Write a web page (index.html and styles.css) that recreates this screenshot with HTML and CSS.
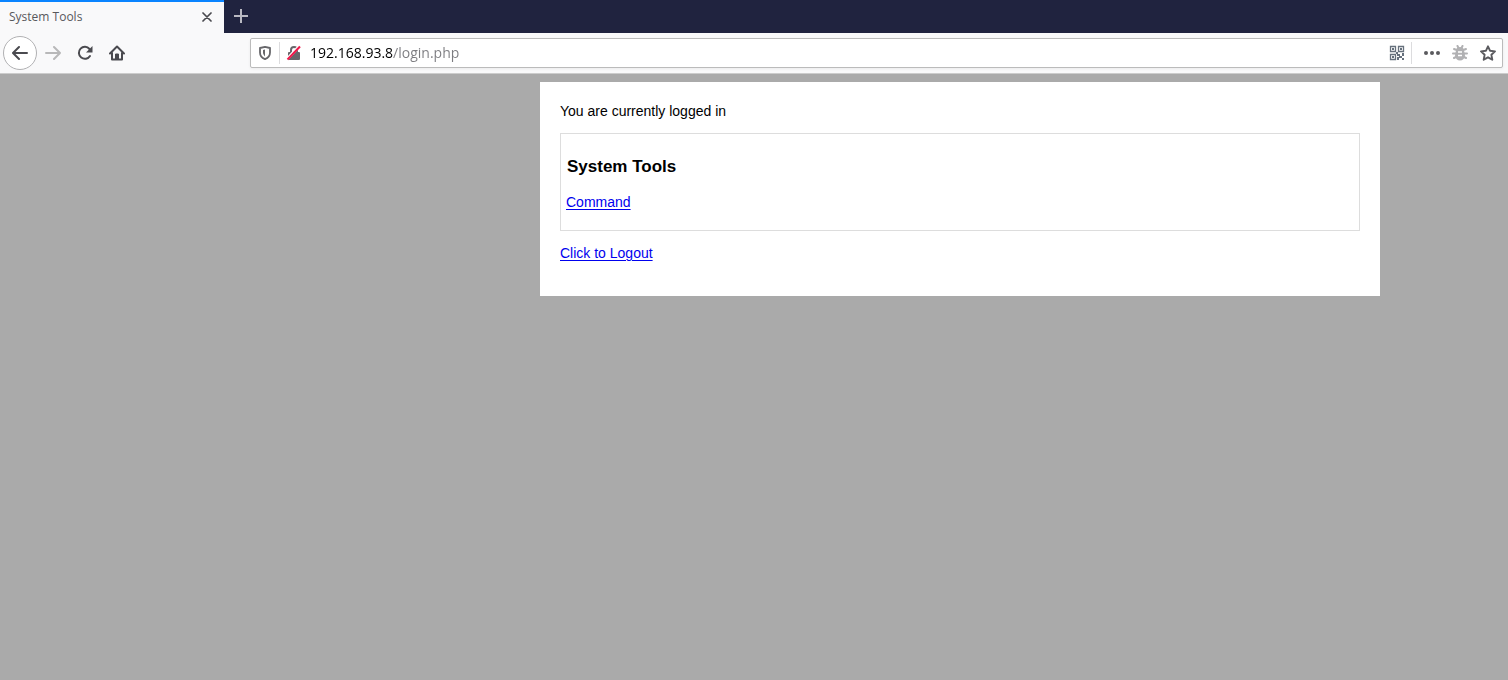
FILE: index.html
```html
<!DOCTYPE html>
<html lang="en">
<head>
<meta charset="utf-8">
<title>System Tools</title>
<link rel="stylesheet" href="styles.css">
</head>
<body>
<header class="browser">
  <div class="tabs">
    <div class="tab">
      <span class="tab-title">System Tools</span>
      <button class="tab-close" aria-label="Close tab"><svg width="10" height="10" viewBox="0 0 10 10"><path d="M1 1l8 8M9 1l-8 8" stroke="#4a4a4f" stroke-width="1.7" stroke-linecap="round"/></svg></button>
    </div>
    <button class="tab-new" aria-label="New tab"><svg width="14" height="14" viewBox="0 0 14 14"><path d="M7 0v14M0 7h14" stroke="#b9b9c2" stroke-width="2"/></svg></button>
  </div>
  <div class="toolbar">
    <div class="nav">
      <button class="nav-back" aria-label="Back"><svg width="16" height="16" viewBox="0 0 16 16"><path d="M15 8H1.500M7 2L1 8l6 6" fill="none" stroke="#4a4a4f" stroke-width="2" stroke-linecap="round" stroke-linejoin="round"/></svg></button>
      <button class="nav-btn" aria-label="Forward"><svg width="16" height="16" viewBox="0 0 16 16"><path d="M1 8h14M9 2l6 6-6 6" fill="none" stroke="#b8b8b9" stroke-width="2" stroke-linecap="round" stroke-linejoin="round"/></svg></button>
      <button class="nav-btn" aria-label="Reload"><svg width="16" height="16" viewBox="0 0 16 16"><path d="M13 11A6 6 0 1 1 12.500 4" fill="none" stroke="#4a4a4f" stroke-width="2" stroke-linecap="round"/><path d="M15.500 1v6.500H9z" fill="#4a4a4f"/></svg></button>
      <button class="nav-btn" aria-label="Home"><svg width="16" height="16" viewBox="0 0 16 16"><path d="M1 8.500L8 1.500l7 7M3 7.500V14.500h10V7.500" fill="none" stroke="#4a4a4f" stroke-width="2" stroke-linecap="round" stroke-linejoin="round"/><path d="M6.500 14V9h3v5z" fill="#4a4a4f" stroke="#4a4a4f"/></svg></button>
    </div>
    <div class="urlbar">
      <button class="url-btn" aria-label="Tracking protection"><svg width="14" height="16" viewBox="0 0 14 16"><path d="M7 1.800l5 1.200v4.500c0 3-2 5.500-5 6.700-3-1.200-5-3.700-5-6.700V3z" fill="none" stroke="#66666a" stroke-width="1.800" stroke-linejoin="round"/><path d="M7 4.500v7C5.800 10.500 5 9 5 7.300V5z" fill="#66666a"/></svg></button>
      <span class="rule"></span>
      <button class="url-btn" aria-label="Connection is not secure"><svg width="16" height="16" viewBox="0 0 16 16"><path d="M5 8V5a3 3 0 0 1 6 0v3" fill="none" stroke="#66666a" stroke-width="2"/><rect x="2" y="7" width="12" height="8" rx="1" fill="#66666a"/><path d="M1 14L13.500 1" stroke="#fff" stroke-width="3"/><path d="M1.500 14.500L14 1.500" stroke="#f0194b" stroke-width="2"/></svg></button>
      <input class="url" type="text" aria-label="Address" value="192.168.93.8/login.php">
      <button class="url-btn" aria-label="QR code"><svg width="16" height="16" viewBox="0 0 16 16"><path d="M1.500 1.500h5v5h-5zM9.500 1.500h5v5h-5zM1.500 9.500h5v5h-5z" fill="none" stroke="#66707c" stroke-width="1.300"/><path d="M3 3h2v2H3zM11 3h2v2h-2zM3 11h2v2H3zM7 7h2v2H7zM8 9h3v2H8zM13 8h2v3h-2zM10 11h3v2h-3zM8 12h2v3H8zM13 13h2v2h-2z" fill="#66707c"/></svg></button>
      <span class="rule rule-actions"></span>
      <button class="url-btn" aria-label="Page actions"><svg width="16" height="16" viewBox="0 0 16 16" fill="#5a5a5e"><circle cx="2" cy="8" r="2"/><circle cx="8" cy="8" r="2"/><circle cx="14" cy="8" r="2"/></svg></button>
      <button class="url-btn" aria-label="Debug"><svg width="16" height="16" viewBox="0 0 16 16"><path d="M4 4.800L2 4M12 4.800l2-.8M1 8.500h14M4 12l-2 1M12 12l2 1M5.500 1l1 2M10.500 1l-1 2" stroke="#b1b1b3" stroke-width="2" stroke-linecap="round"/><path d="M4 5.500a4 3.500 0 0 1 8 0l1 4.500a5 5.500 0 0 1-10 0z" fill="#b1b1b3"/><path d="M6 7h4M6 10.500h4" stroke="#fff" stroke-width="1.500"/></svg></button>
      <button class="url-btn" aria-label="Bookmark"><svg width="16" height="16" viewBox="0 0 16 16"><path d="M8 1.300l2.100 4.500 4.900.6-3.600 3.400.9 4.900L8 12.300l-4.300 2.400.9-4.900L1 6.400l4.900-.6z" fill="none" stroke="#5a5a5e" stroke-width="1.900" stroke-linejoin="round"/></svg></button>
    </div>
  </div>
</header>
<main class="card">
  <p class="status">You are currently logged in</p>
  <section class="tools">
    <h1 class="tools-title">System Tools</h1>
    <a class="tools-link" href="command.php">Command</a>
  </section>
  <a href="logout.php">Click to Logout</a>
</main>
</body>
</html>
```
FILE: styles.css
```css
* { box-sizing: border-box; }
body {
  margin: 0;
  background: #aaa;
  color: #000;
  font: 14px/16px "Liberation Sans", Arial, sans-serif;
}
button {
  display: flex;
  align-items: center;
  justify-content: center;
  flex: none;
  padding: 0;
  border: 0;
  background: none;
}
svg { display: block; }
.browser { font-family: "Open Sans", "Noto Sans", sans-serif; }
.tabs {
  display: flex;
  height: 33px;
  background: #20233f;
}
.tab {
  display: flex;
  align-items: center;
  justify-content: space-between;
  width: 224px;
  padding: 0 8px 2px 9px;
  border-top: 2px solid #0a84ff;
  background: #f9f9fa;
}
.tab-title { color: #58585c; font-size: 12px; }
.tab-close { width: 18px; height: 18px; }
.tab-new { width: 34px; padding-bottom: 1px; }
.toolbar {
  display: flex;
  align-items: center;
  height: 41px;
  padding: 0 5px 1px 3px;
  border-bottom: 1px solid #ccc;
  background: #f9f9fa;
}
.nav {
  display: flex;
  align-items: center;
  flex: none;
  width: 247px;
}
.nav-back {
  width: 34px;
  height: 34px;
  border: 1px solid #b1b1b3;
  border-radius: 50%;
  background: #fff;
}
.nav-btn { width: 32px; height: 32px; }
.urlbar {
  display: flex;
  align-items: center;
  flex: 1;
  min-width: 0;
  height: 30px;
  border: 1px solid #bbb;
  border-radius: 2px;
  background: #fff;
  box-shadow: 0 1px 3px rgba(0, 0, 0, 0.06);
}
.url-btn { width: 28px; height: 28px; }
.rule { flex: none; width: 1px; height: 22px; background: #dcdcde; }
.rule-actions { margin-right: 6px; }
.url {
  flex: 1;
  min-width: 0;
  padding: 0 0 0 2px;
  border: 0;
  background: linear-gradient(90deg, #000 85px, #7c7c80 85px);
  background-clip: text;
  -webkit-background-clip: text;
  color: transparent;
  font: 14px/20px "Open Sans", "Noto Sans", sans-serif;
}
.card {
  max-width: 840px;
  margin: 8px 128px 0 auto;
  padding: 21px 20px 35px;
  background: #fff;
}
.status { margin: 0 0 14px; }
.tools {
  margin-bottom: 14px;
  padding: 23px 5px 20px;
  border: 1px solid #ddd;
}
.tools-title {
  margin: 0 1px 17px;
  font-size: 17px;
  line-height: 20px;
}
.tools-link { display: inline-block; }
a { color: #00e; text-underline-offset: 2px; }
```
